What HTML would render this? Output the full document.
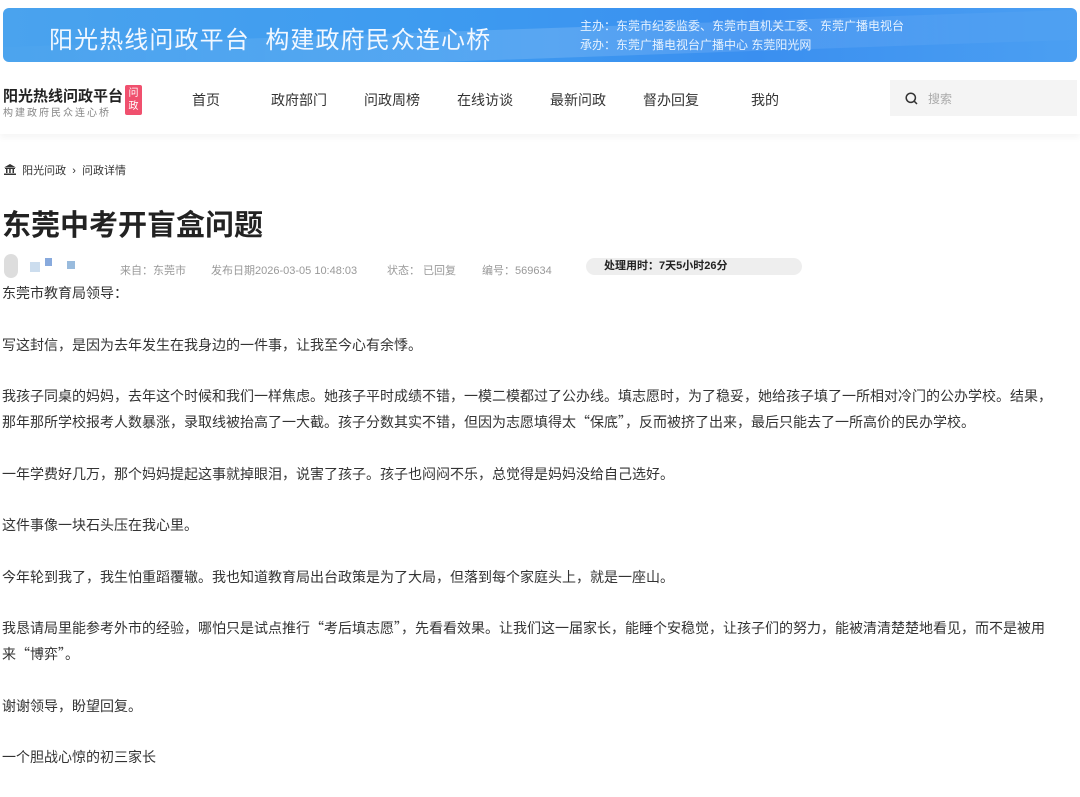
<!DOCTYPE html>
<html><head><meta charset="utf-8"><style>
*{margin:0;padding:0;box-sizing:border-box}
body{width:1080px;height:767px;overflow:hidden;background:#fff;font-family:"Liberation Sans","Noto Sans CJK SC",sans-serif;color:#333;position:relative}
.banner{position:absolute;left:3px;top:8px;width:1074px;height:54px;border-radius:6px;background:linear-gradient(90deg,#4aa3ee 0%,#3d9bf0 40%,#3a8ff0 70%,#4b9ff2 100%);overflow:hidden}
.banner .sw{position:absolute;left:-50px;top:20px;width:1200px;height:30px;background:linear-gradient(90deg,rgba(255,255,255,.0),rgba(255,255,255,.15),rgba(255,255,255,0));transform:rotate(-2deg)}
.banner .t{position:absolute;left:46px;top:12px;font-size:24px;color:#f2f8ff;letter-spacing:1.1px}
.banner .r{position:absolute;left:577px;top:9px;font-size:12px;color:#e6f2ff;line-height:19px}
.nav{position:absolute;left:0;top:68px;width:1080px;height:66px;background:#fff;box-shadow:0 4px 6px rgba(0,0,0,.04)}
.logo1{position:absolute;left:3px;top:17px;font-size:15px;font-weight:bold;color:#222}
.logo2{position:absolute;left:3px;top:36px;font-size:10px;color:#888;letter-spacing:2px}
.badge{position:absolute;left:125px;top:17px;width:17px;height:30px;background:#f0506e;color:#fff;font-size:10px;line-height:13px;text-align:center;border-radius:2px;padding-top:2px}
.nav a{position:absolute;top:22px;font-size:14px;color:#333}
.search{position:absolute;left:890px;top:12px;width:187px;height:36px;background:#f4f4f4}
.search span{position:absolute;left:38px;top:10px;font-size:12px;color:#aaa}
.bc{position:absolute;left:4px;top:162px;font-size:11px;color:#333}
h1{position:absolute;left:2px;top:202px;font-size:29px;font-weight:bold;color:#222}
.meta{position:absolute;top:262px;font-size:11px;color:#999}
.pill{position:absolute;left:586px;top:258px;width:216px;height:17px;border-radius:9px;background:#eee;font-size:11px;font-weight:bold;color:#222;padding-left:18px;line-height:17px}
.content{position:absolute;left:2px;top:281px;width:1058px;font-family:"Noto Sans CJK SC","Liberation Sans",sans-serif;font-size:14px;line-height:25.8px;color:#333}
.content p{margin-bottom:25.8px}
</style></head><body>
<div class="banner"><div class="sw"></div><div class="t">阳光热线问政平台&nbsp;&nbsp;构建政府民众连心桥</div>
<div class="r">主办：东莞市纪委监委、东莞市直机关工委、东莞广播电视台<br>承办：东莞广播电视台广播中心 东莞阳光网</div></div>
<div class="nav">
<div class="logo1">阳光热线问政平台</div><div class="logo2">构建政府民众连心桥</div><div class="badge">问<br>政</div>
<a style="left:192px">首页</a><a style="left:271px">政府部门</a><a style="left:364px">问政周榜</a><a style="left:457px">在线访谈</a><a style="left:550px">最新问政</a><a style="left:643px">督办回复</a><a style="left:751px">我的</a>
<div class="search"><svg style="position:absolute;left:15px;top:12px" width="13" height="13" viewBox="0 0 13 13"><circle cx="5.8" cy="5.8" r="4.6" fill="none" stroke="#333" stroke-width="1.5"/><path d="M9.2 9.2L12 12" stroke="#333" stroke-width="1.5"/></svg><span>搜索</span></div>
</div>
<div class="bc"><svg width="12" height="11" viewBox="0 0 12 11" style="vertical-align:-1px"><path d="M6 0L0 3.5h12z M1 4h10v1H1z M2 5h1.5v4H2z M5.2 5h1.5v4H5.2z M8.5 5H10v4H8.5z M0 9.5h12V11H0z" fill="#333"/></svg>&nbsp; 阳光问政 &nbsp;›&nbsp; 问政详情</div>
<h1>东莞中考开盲盒问题</h1>
<div style="position:absolute;left:4px;top:254px;width:14px;height:24px;background:#ddd;border-radius:7px"></div>
<div style="position:absolute;left:30px;top:262px;width:10px;height:10px;background:#cde"></div>
<div style="position:absolute;left:45px;top:258px;width:7px;height:8px;background:#8ad"></div>
<div style="position:absolute;left:67px;top:261px;width:8px;height:8px;background:#9bd"></div>
<div class="meta" style="left:120px">来自：东莞市</div>
<div class="meta" style="left:211px">发布日期2026-03-05 10:48:03</div>
<div class="meta" style="left:387px">状态：&nbsp;已回复</div>
<div class="meta" style="left:482px">编号：569634</div>
<div class="pill">处理用时：7天5小时26分</div>
<div class="content">
<p>东莞市教育局领导：</p>
<p>写这封信，是因为去年发生在我身边的一件事，让我至今心有余悸。</p>
<p>我孩子同桌的妈妈，去年这个时候和我们一样焦虑。她孩子平时成绩不错，一模二模都过了公办线。填志愿时，为了稳妥，她给孩子填了一所相对冷门的公办学校。结果，那年那所学校报考人数暴涨，录取线被抬高了一大截。孩子分数其实不错，但因为志愿填得太“保底”，反而被挤了出来，最后只能去了一所高价的民办学校。</p>
<p>一年学费好几万，那个妈妈提起这事就掉眼泪，说害了孩子。孩子也闷闷不乐，总觉得是妈妈没给自己选好。</p>
<p>这件事像一块石头压在我心里。</p>
<p>今年轮到我了，我生怕重蹈覆辙。我也知道教育局出台政策是为了大局，但落到每个家庭头上，就是一座山。</p>
<p>我恳请局里能参考外市的经验，哪怕只是试点推行“考后填志愿”，先看看效果。让我们这一届家长，能睡个安稳觉，让孩子们的努力，能被清清楚楚地看见，而不是被用来“博弈”。</p>
<p>谢谢领导，盼望回复。</p>
<p>一个胆战心惊的初三家长</p>
</div>
</body></html>
